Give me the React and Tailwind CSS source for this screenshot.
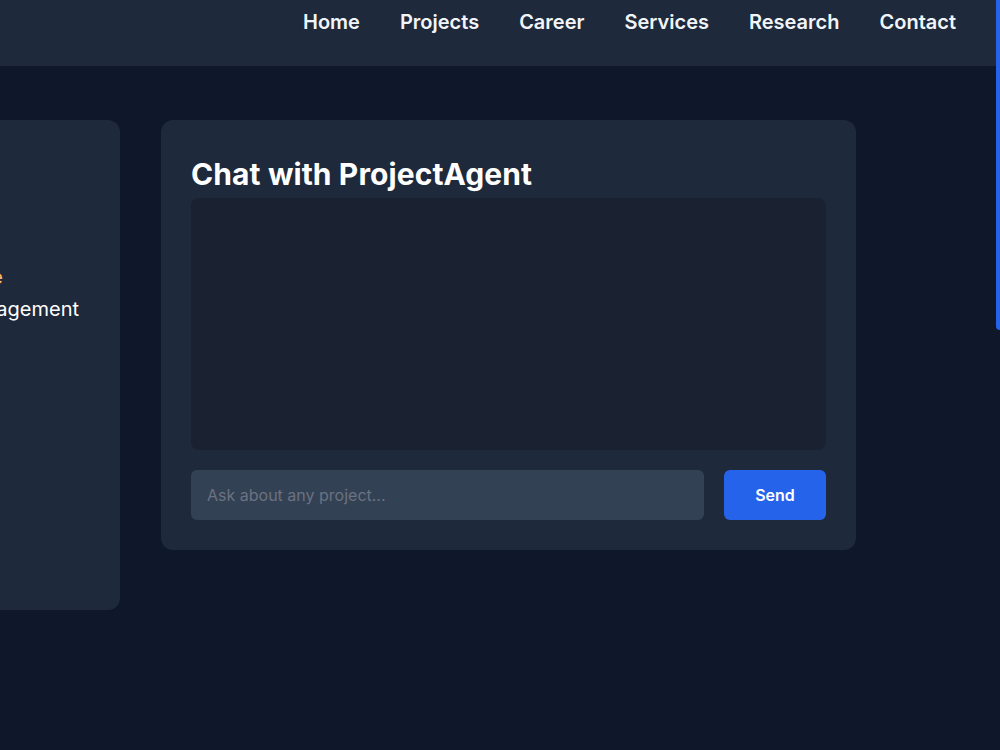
export default function App() {
  return (
    <div
      className="min-h-screen bg-[#0f172a] text-white overflow-hidden relative"
      style={{ fontFamily: "Inter, 'Noto Sans', sans-serif" }}
    >
      {/* header */}
      <header className="h-[66px] bg-[#1e293b] flex justify-end pr-[44px] pt-[8px]">
        <nav className="flex gap-10 text-[20px] font-semibold leading-[28px] text-slate-100">
          <span>Home</span>
          <span>Projects</span>
          <span>Career</span>
          <span>Services</span>
          <span>Research</span>
          <span>Contact</span>
        </nav>
      </header>

      <main className="flex items-start gap-[41px] pt-[54px]">
        {/* left card, mostly scrolled out of view */}
        <div className="w-[340px] ml-[-220px] h-[490px] shrink-0 rounded-xl bg-[#1e293b] pt-[141px]">
          <div className="text-right pr-[117px] text-[20px] leading-[32px] text-orange-300">
            Vibe
          </div>
          <div className="text-right pr-[41px] text-[20px] leading-[32px] text-white">
            Management
          </div>
        </div>

        {/* chat */}
        <section className="w-[695px] shrink-0 rounded-xl bg-[#1e293b] px-[30px] pb-[30px] pt-[34px]">
          <h2 className="text-[30px] font-bold leading-[40px] tracking-[0.1px] mb-[4px]">
            Chat with ProjectAgent
          </h2>
          <div className="h-[252px] rounded-lg bg-[#1a2232]"></div>
          <div className="mt-5 flex gap-5">
            <input
              className="flex-1 h-[50px] rounded-md bg-[#334155] px-4 text-[16px] text-white placeholder:text-[#6b7280] outline-none"
              placeholder="Ask about any project..."
            />
            <button className="w-[102px] h-[50px] rounded-md bg-[#2563eb] text-[16px] font-semibold">
              Send
            </button>
          </div>
        </section>
      </main>

      {/* scrollbar thumb */}
      <div className="absolute right-0 top-0 w-[4px] h-[330px] rounded-bl bg-[#2563eb]"></div>
    </div>
  );
}
